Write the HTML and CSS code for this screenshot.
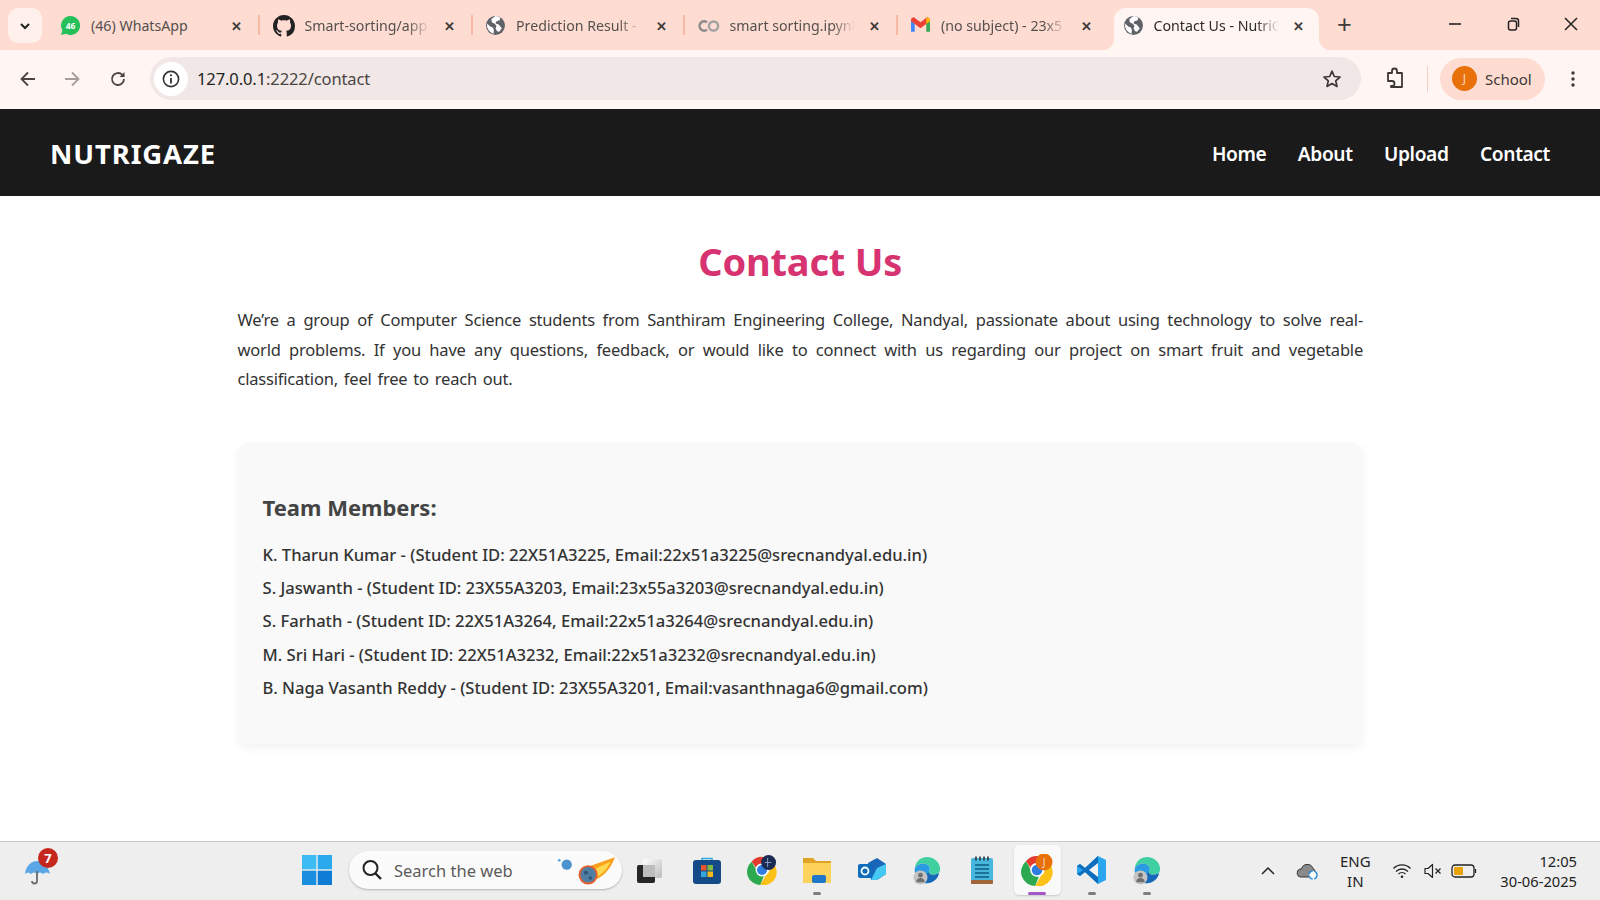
FILE: index.html
```html
<!DOCTYPE html>
<html lang="en">
<head>
<meta charset="utf-8">
<title>Contact Us - NutriGaze</title>
<link rel="stylesheet" href="styles.css">
</head>
<body>
<div class="screen">
  <header class="tabstrip">
    <div class="tabmenu"><svg class="i12" viewBox="0 0 12 12"><path d="M2 4l4 4 4-4" fill="none" stroke="#222" stroke-width="2"/></svg></div>
    <div class="tab">
      <svg class="favicon" viewBox="0 0 20 20"><path d="M10 1a9 9 0 0 0-7.700 13.600L1 19l4.600-1.200A9 9 0 1 0 10 1z" fill="#25c05a"/><text x="10" y="13.500" class="favbadge">46</text></svg>
      <span class="tabtitle">(46) WhatsApp</span><span class="tabx">✕</span>
    </div>
    <div class="tab">
      <svg class="favicon big" viewBox="0 0 16 16"><path fill="#222" d="M8 0C3.580 0 0 3.580 0 8c0 3.540 2.290 6.530 5.470 7.590.4.070.55-.17.55-.38 0-.19-.01-.82-.01-1.490-2.010.37-2.530-.49-2.690-.94-.09-.23-.48-.94-.82-1.130-.28-.15-.68-.52-.01-.53.63-.01 1.080.58 1.230.82.72 1.210 1.870.87 2.330.66.07-.52.28-.87.51-1.070-1.780-.2-3.640-.89-3.640-3.950 0-.87.31-1.590.82-2.150-.08-.2-.36-1.020.08-2.120 0 0 .67-.21 2.200.82.64-.18 1.320-.27 2-.27s1.360.09 2 .27c1.530-1.040 2.200-.82 2.200-.82.44 1.100.16 1.920.08 2.120.51.56.82 1.270.82 2.150 0 3.070-1.870 3.750-3.650 3.950.29.25.54.73.54 1.480 0 1.070-.01 1.930-.01 2.200 0 .21.15.46.55.38A8.010 8.010 0 0 0 16 8c0-4.420-3.580-8-8-8z"/></svg>
      <span class="tabtitle fade">Smart-sorting/app</span><span class="tabx">✕</span>
    </div>
    <div class="tab">
      <svg class="favicon" viewBox="0 0 20 20"><use href="#globe"/></svg>
      <span class="tabtitle fade">Prediction Result -</span><span class="tabx">✕</span>
    </div>
    <div class="tab">
      <svg class="favicon wide" viewBox="0 0 22 14"><path d="M9 3.200a4.700 4.700 0 1 0 0 7.600" fill="none" stroke="#8d8d8d" stroke-width="2.500"/><circle cx="15.500" cy="7" r="4.600" fill="none" stroke="#a3a3a3" stroke-width="2.500"/></svg>
      <span class="tabtitle fade">smart sorting.ipynb</span><span class="tabx">✕</span>
    </div>
    <div class="tab">
      <svg class="favicon" viewBox="0 0 20 20"><path d="M1 5v11h3.500V8z" fill="#4285f4"/><path d="M15.500 8v8H19V5z" fill="#34a853"/><path d="M1 3.500V6l9 6.500L19 6V3.500L16.500 2 10 7 3.500 2z" fill="#ea4335"/><path d="M15.500 3.200V8.500L19 6V3.500L16.800 2.200z" fill="#fbbc04"/></svg>
      <span class="tabtitle fade">(no subject) - 23x5</span><span class="tabx">✕</span>
    </div>
    <div class="tab active">
      <svg class="favicon" viewBox="0 0 20 20"><use href="#globe"/></svg>
      <span class="tabtitle fade">Contact Us - NutriG</span><span class="tabx">✕</span>
    </div>
    <div class="newtab">+</div>
    <div class="winctl">
      <svg class="i16" viewBox="0 0 16 16"><path d="M2 8h12" stroke="#222" stroke-width="1.600"/></svg>
      <svg class="i16" viewBox="0 0 16 16"><rect x="3.500" y="5" width="8" height="9" rx="2" fill="none" stroke="#222" stroke-width="1.500"/><path d="M6 2.500h5a2.500 2.500 0 0 1 2.500 2.500v6" fill="none" stroke="#222" stroke-width="1.500"/></svg>
      <svg class="i16" viewBox="0 0 16 16"><path d="M2 2l12 12M14 2L2 14" stroke="#222" stroke-width="1.500"/></svg>
    </div>
  </header>

  <div class="toolbar">
    <svg class="i20 navbtn" viewBox="0 0 20 20"><path d="M17 10H4M10 3.500L3.500 10l6.500 6.500" fill="none" stroke="#4a4543" stroke-width="1.800"/></svg>
    <svg class="i20 navbtn" viewBox="0 0 20 20"><path d="M3 10h13M10 3.500l6.500 6.500-6.500 6.500" fill="none" stroke="#a39e9c" stroke-width="1.800"/></svg>
    <svg class="i20 navbtn" viewBox="0 0 20 20"><path d="M16 10a6 6 0 1 1-1.800-4.300L16 7.500" fill="none" stroke="#4a4543" stroke-width="1.800"/><path d="M16.500 3v5h-5z" fill="#4a4543"/></svg>
    <div class="omnibox">
      <span class="siteinfo"><svg class="i20" viewBox="0 0 20 20"><circle cx="10" cy="10" r="7.600" fill="none" stroke="#333" stroke-width="1.600"/><path d="M10 9v5.500" stroke="#333" stroke-width="1.800"/><circle cx="10" cy="6.300" r="1.100" fill="#333"/></svg></span>
      <span class="url">127.0.0.1<span class="urlrest">:2222/contact</span></span>
      <svg class="i20 star" viewBox="0 0 20 20"><path d="M10 2.200l2.300 5.300 5.700.5-4.300 3.800 1.300 5.600L10 14.500l-5 2.900 1.300-5.600L2 8l5.700-.5z" fill="none" stroke="#3c3836" stroke-width="1.700" stroke-linejoin="round"/></svg>
    </div>
    <svg class="i24 ext" viewBox="0 0 24 24"><path d="M5 7h4V5a2.500 2.500 0 0 1 5 0v2h5v14H8v-1h1a2.500 2.500 0 0 0 0-5H5z" transform="translate(0 -1)" fill="none" stroke="#3c3836" stroke-width="1.800" stroke-linejoin="round"/></svg>
    <span class="toolsep"></span>
    <div class="profile"><span class="avatar">J</span><span class="profname">School</span></div>
    <svg class="i20 kebab" viewBox="0 0 20 20"><circle cx="10" cy="4" r="1.700" fill="#3c3836"/><circle cx="10" cy="10" r="1.700" fill="#3c3836"/><circle cx="10" cy="16" r="1.700" fill="#3c3836"/></svg>
  </div>

  <nav class="sitenav">
    <div class="logo">NUTRIGAZE</div>
    <div class="navlinks"><a>Home</a><a>About</a><a>Upload</a><a>Contact</a></div>
  </nav>

  <main class="page">
    <h1>Contact Us</h1>
    <p class="intro">We’re a group of Computer Science students from Santhiram Engineering College, Nandyal, passionate about using technology to solve real-world problems. If you have any questions, feedback, or would like to connect with us regarding our project on smart fruit and vegetable classification, feel free to reach out.</p>
    <section class="card">
      <h2>Team Members:</h2>
      <ul>
        <li>K. Tharun Kumar - (Student ID: 22X51A3225, Email:22x51a3225@srecnandyal.edu.in)</li>
        <li>S. Jaswanth - (Student ID: 23X55A3203, Email:23x55a3203@srecnandyal.edu.in)</li>
        <li>S. Farhath - (Student ID: 22X51A3264, Email:22x51a3264@srecnandyal.edu.in)</li>
        <li>M. Sri Hari - (Student ID: 22X51A3232, Email:22x51a3232@srecnandyal.edu.in)</li>
        <li>B. Naga Vasanth Reddy - (Student ID: 23X55A3201, Email:vasanthnaga6@gmail.com)</li>
      </ul>
    </section>
  </main>

  <footer class="taskbar">
    <div class="weather">
      <svg class="i32" viewBox="0 0 32 32"><path d="M3 20C4 11 10 7 15 7s11 4 13 13c-3-2-5-2-7 0-2-2-4-2-6 0-2-2-4-2-6 0-2-2-4-2-6 0z" fill="#5aa7e8"/><path d="M15 17v10a2.500 2.500 0 0 1-5 0" fill="none" stroke="#6b6b6b" stroke-width="1.800"/></svg>
      <span class="wbadge">7</span>
    </div>
    <div class="tbcenter">
      <svg class="winlogo" viewBox="0 0 30 30"><rect width="14.300" height="14.300" fill="#3cbcf3"/><rect x="15.700" width="14.300" height="14.300" fill="#2aa9ec"/><rect y="15.700" width="14.300" height="14.300" fill="#1a8fe0"/><rect x="15.700" y="15.700" width="14.300" height="14.300" fill="#0f7dd6"/></svg>
      <div class="search">
        <svg class="i24" viewBox="0 0 24 24"><circle cx="10.500" cy="10" r="7" fill="none" stroke="#222" stroke-width="2"/><path d="M15.500 15.500L21 21" stroke="#222" stroke-width="2.400"/></svg>
        <span class="stext">Search the web</span>
        <svg class="comet" viewBox="0 0 56 28"><circle cx="3" cy="5" r="1.300" fill="#58a6df"/><circle cx="10" cy="9" r="4.800" fill="#4b93cf"/><path d="M27 12L55 2c-3 8-8 17-19 21z" fill="#f9a11b"/><path d="M36 13l15-7c-3 6-6 11-13 14z" fill="#ffd84d"/><circle cx="30" cy="18.500" r="9" fill="#e8612c"/><circle cx="30" cy="18.500" r="7.200" fill="#4f7da3"/><circle cx="28" cy="16.500" r="1.900" fill="#2f5674"/><circle cx="32" cy="21.500" r="1.600" fill="#2f5674"/></svg>
      </div>
      <div class="tbicons">
        <span class="tbi first"><svg class="i30" viewBox="0 0 30 30"><defs><linearGradient id="tv" x1="0" y1="0" x2="1" y2="1"><stop offset="0" stop-color="#fff"/><stop offset="1" stop-color="#bbb"/></linearGradient></defs><rect x="9" y="4" width="19" height="19" rx="2" fill="url(#tv)"/><rect x="3" y="10" width="18" height="18" rx="2" fill="#262626"/><rect x="9" y="10" width="12" height="12" fill="#bdbdbd"/></svg></span>
        <span class="tbi"><svg class="i30" viewBox="0 0 30 30"><path d="M10 6V3.500h10V6" fill="none" stroke="#33a6dc" stroke-width="1.500"/><rect x="1" y="5" width="28" height="24" rx="3" fill="#134a87"/><rect x="9" y="10" width="5.500" height="5.500" fill="#e7532f"/><rect x="15.500" y="10" width="5.500" height="5.500" fill="#7ebb42"/><rect x="9" y="16.500" width="5.500" height="5.500" fill="#33a6dc"/><rect x="15.500" y="16.500" width="5.500" height="5.500" fill="#f7b91c"/></svg></span>
        <span class="tbi"><svg class="i30" viewBox="0 0 32 32"><use href="#chrome"/><circle cx="23" cy="8" r="8" fill="#1b2a52"/><path d="M22 3v10M19 8h7" stroke="#8ea2c8" stroke-width="1"/></svg></span>
        <span class="tbi"><svg class="i32" viewBox="0 0 32 32"><path d="M2 4h10l3 3h15v5H2z" fill="#e0a324"/><path d="M2 9h28v20H2z" fill="#fdd25b"/><rect x="11" y="21" width="14" height="8" rx="2" fill="#1f77c9"/></svg><span class="run"></span></span>
        <span class="tbi"><svg class="i30" viewBox="0 0 30 30"><path d="M11 8l9-5 9 6v10l-9 6H14z" fill="#1a66b8"/><path d="M20 13l9-4v10l-9 6H14z" fill="#45c8f1"/><rect x="1" y="9" width="14" height="14" rx="2" fill="#0f6cbd"/><circle cx="8" cy="16" r="3.500" fill="none" stroke="#fff" stroke-width="1.800"/></svg></span>
        <span class="tbi"><svg class="i30" viewBox="0 0 32 32"><use href="#edge"/></svg></span>
        <span class="tbi"><svg class="i30" viewBox="0 0 30 30"><rect x="4" y="3" width="22" height="25" rx="2" fill="#46b6dd"/><rect x="4" y="25" width="22" height="4" rx="1" fill="#a2653a"/><path d="M9 1.500v4M13 1.500v4M17 1.500v4M21 1.500v4" stroke="#263238" stroke-width="1.600"/><path d="M8 10h14M8 14h14M8 18h14M8 22h14" stroke="#0e5d80" stroke-width="1.300"/></svg></span>
        <span class="tbi current"><svg class="i32" viewBox="0 0 32 32"><use href="#chrome"/><circle cx="23" cy="8" r="8.500" fill="#e8710a"/><text x="23" y="12" class="jbadge">J</text></svg><span class="run purple"></span></span>
        <span class="tbi"><svg class="i30" viewBox="0 0 30 30"><path d="M21 1l8 4v20l-8 4L8 17l-5 4-3-2v-8l3-2 5 4z" fill="#2aa6ee"/><path d="M21 1v28L8 17l-5 4-3-2 6-4-6-4 3-2 5 4z" fill="#0f6dbf"/><path d="M21 8v14l-9-7z" fill="#f3f3f3"/></svg><span class="run"></span></span>
        <span class="tbi"><svg class="i30" viewBox="0 0 32 32"><use href="#edge"/></svg><span class="run"></span></span>
      </div>
    </div>
    <div class="tray">
      <svg class="i16" viewBox="0 0 16 16"><path d="M2 11l6-6 6 6" fill="none" stroke="#222" stroke-width="1.500"/></svg>
      <svg class="i24 cloud" viewBox="0 0 24 24"><path d="M5 18a4 4 0 0 1 .5-8A6 6 0 0 1 17 9.500a3.500 3.500 0 0 1 2 2.500L13 18z" fill="#8a8a8a" stroke="#333" stroke-width="1"/><circle cx="17" cy="16" r="4" fill="#fff" stroke="#2e8fdc" stroke-width="1.400" stroke-dasharray="5 1.500"/></svg>
      <div class="lang"><span>ENG</span><span>IN</span></div>
      <svg class="i20 wifi" viewBox="0 0 20 20"><path d="M1.500 7.500a12 12 0 0 1 17 0M4 10.500a8.500 8.500 0 0 1 12 0M6.500 13a5 5 0 0 1 7 0" fill="none" stroke="#222" stroke-width="1.300"/><circle cx="10" cy="15.800" r="1.300" fill="#222"/></svg>
      <svg class="i20 sound" viewBox="0 0 20 20"><path d="M2 7.500h3L9.500 3.500v13L5 12.500H2z" fill="none" stroke="#222" stroke-width="1.200" stroke-linejoin="round"/><path d="M12.500 7.500l5 5M17.500 7.500l-5 5" stroke="#222" stroke-width="1.200"/></svg>
      <svg class="i24 batt" viewBox="0 0 26 14"><rect x="1" y="1" width="22" height="12" rx="3" fill="none" stroke="#222" stroke-width="1.300"/><rect x="3" y="3" width="9" height="8" rx="1" fill="#e9a30a"/><path d="M24.500 5v4" stroke="#222" stroke-width="1.300"/></svg>
      <div class="clock"><span>12:05</span><span>30-06-2025</span></div>
    </div>
  </footer>
</div>

<svg class="defs" width="0" height="0">
  <defs>
    <symbol id="globe" viewBox="0 0 20 20">
      <circle cx="10" cy="10" r="9" fill="#5f6368"/>
      <path d="M10 1c-1.500 1.500-3 2-4 3l.500 3 3 1.500 1.500 2-1 2 1.500 3 2 .5 2.500-3.500L13 9l-3-1 1-2 3-1 .5-2.500A9 9 0 0 0 10 1zM2 8l3 3 2.500 1 1 2.500L8 18A9 9 0 0 1 2 8z" fill="#fff"/>
    </symbol>
    <symbol id="chrome" viewBox="0 0 32 32">
      <path d="M16 2a14 14 0 0 1 12.100 7H16a7 7 0 0 0-6.500 4.400L4.900 7.300A14 14 0 0 1 16 2z" fill="#e33b2e"/>
      <path d="M4.900 7.300L11 17.500a6 6 0 0 0 7 4.800l-3.800 9.600A14 14 0 0 1 4.900 7.300z" fill="#2da94f"/>
      <path d="M28.100 9A14 14 0 0 1 14.200 31.900L20.500 21a7 7 0 0 0 .5-12z" fill="#fbc116"/>
      <circle cx="16" cy="16" r="6.800" fill="#fff"/>
      <circle cx="16" cy="16" r="5.300" fill="#2f7de1"/>
    </symbol>
    <symbol id="edge" viewBox="0 0 32 32">
      <path d="M3 14C4 6 10 2 16 2c8 0 14 6 14 13 0 4-3 6-7 6-3 0-5-1-5-3 0-1 1-1 1-3 0-3-3-6-7-6-4 0-7 2-9 5z" fill="#3fcfa0"/>
      <path d="M3 14c2-3 5-5 9-5 4 0 7 3 7 6 0 2-1 2-1 3-3 6-3 10 3 11a14 14 0 0 1-8 1C7 29 2 22 3 14z" fill="#2a9be0"/>
      <path d="M18 18c0 2 2 3 5 3 2 0 5-1 6-2-1 6-6 11-13 11-6 0-6-6 2-12z" fill="#1668b8"/>
      <circle cx="9" cy="24" r="7.500" fill="#c4c4c4"/>
      <circle cx="9" cy="21.500" r="2.500" fill="#6f6f6f"/>
      <path d="M4.500 29c0-3 2-4.500 4.500-4.500s4.500 1.500 4.500 4.500z" fill="#6f6f6f"/>
    </symbol>
  </defs>
</svg>
</body>
</html>
```

FILE: styles.css
```css
* { box-sizing: border-box; }
html, body { margin: 0; height: 100%; overflow: hidden; }
body { font-family: "Noto Sans", "Open Sans", "Liberation Sans", sans-serif; color: #333; background: #fff; }
.screen { width: 1600px; height: 900px; display: flex; flex-direction: column; overflow: hidden; }
.defs { display: block; height: 0; }

.i12 { width: 12px; height: 12px; }
.i16 { width: 16px; height: 16px; flex: none; }
.i20 { width: 20px; height: 20px; flex: none; }
.i24 { width: 24px; height: 24px; flex: none; }
.i30 { width: 30px; height: 30px; flex: none; }
.i32 { width: 32px; height: 32px; flex: none; }

/* browser tabs */
.tabstrip { height: 50px; flex: none; display: flex; align-items: flex-end; background: #ffdcd2; padding-left: 8px; }
.tabmenu { width: 34px; height: 35px; margin-bottom: 7px; margin-right: 5.500px; border-radius: 10px; background: #fff0eb; display: flex; align-items: center; justify-content: center; }
.tab { width: 212.500px; height: 42px; flex: none; display: flex; align-items: center; padding: 0 0 7px 12.500px; position: relative; color: #54504e; font-size: 14.200px; }
.tab::after { content: ""; position: absolute; right: 0; top: 7px; height: 20px; width: 2px; background: #f7b9a8; }
.tab:nth-child(6)::after { display: none; }
.tab.active { width: 205px; margin-left: 3.500px; background: #fff6f3; border-radius: 12px 12px 0 0; color: #2c2a29; padding-left: 9px; }
.tab.active::before, .tab.active::after { content: ""; position: absolute; bottom: 0; top: auto; width: 12px; height: 12px; }
.tab.active::before { left: -12px; background: radial-gradient(circle at 0 0, transparent 12px, #fff6f3 12.500px); }
.tab.active::after { right: -12px; background: radial-gradient(circle at 100% 0, transparent 12px, #fff6f3 12.500px); }
.favicon { width: 21px; height: 21px; flex: none; }
.favicon.big { width: 22px; height: 22px; }
.favicon.wide { width: 22px; height: 14px; }
.favbadge { font-size: 8px; font-weight: 700; fill: #fff; text-anchor: middle; font-family: "Noto Sans", sans-serif; }
.jbadge { font-size: 10px; fill: #fbd9c0; text-anchor: middle; font-family: "Noto Sans", sans-serif; }
.tabtitle { width: 125px; margin-left: 10px; white-space: nowrap; overflow: hidden; flex: none; }
.tabtitle.fade { -webkit-mask-image: linear-gradient(90deg, #000 82%, transparent); mask-image: linear-gradient(90deg, #000 82%, transparent); }
.tabx { margin-left: 11px; width: 18px; text-align: center; font-size: 13px; color: #3f3b39; font-weight: 700; }
.newtab { margin-left: 16px; margin-bottom: 8px; font-size: 26px; line-height: 36px; color: #3f3b39; width: 20px; text-align: center; }
.winctl { margin-left: auto; margin-bottom: 18px; display: flex; gap: 42px; padding-right: 21px; }

/* toolbar */
.toolbar { height: 59px; flex: none; display: flex; align-items: center; background: #fff6f3; padding: 0 0 2px 18px; }
.navbtn { margin-right: 24px; }
.navbtn:nth-child(2) { margin-right: 25.500px; }
.navbtn:nth-child(3) { margin-right: 22.500px; }
.omnibox { width: 1211px; height: 43px; border-radius: 22px; background: #f1e7e6; display: flex; align-items: center; padding: 0 19px 0 4px; flex: none; }
.siteinfo { width: 34px; height: 34px; border-radius: 50%; background: #fff; display: flex; align-items: center; justify-content: center; flex: none; }
.url { margin-left: 9px; font-size: 16.500px; letter-spacing: -.1px; color: #1f1f1f; }
.urlrest { color: #4a4543; }
.star { margin-left: auto; }
.ext { margin-left: 22px; }
.toolsep { width: 1px; height: 26px; background: #f3cfc5; margin-left: 20px; }
.profile { margin-left: 12px; width: 105px; height: 42px; border-radius: 21px; background: #ffdcd2; display: flex; align-items: center; padding-left: 12px; gap: 8px; color: #3c3836; font-size: 15px; flex: none; }
.avatar { width: 25px; height: 25px; border-radius: 50%; background: #e8710a; color: #fbd9c0; font-size: 12px; display: flex; align-items: center; justify-content: center; }
.kebab { margin-left: 18px; }

/* site navigation */
.sitenav { height: 87px; flex: none; background: #1a1a1a; display: flex; align-items: center; justify-content: space-between; padding: 1px 50px 0; color: #fff; }
.logo { font-size: 27.500px; font-weight: 700; letter-spacing: .9px; }
.navlinks { display: flex; gap: 31.500px; font-size: 19.200px; font-weight: 600; letter-spacing: -.4px; }

/* page */
.page { flex: 1; min-height: 0; padding: 0 237px 0 237.500px; }
h1 { margin: 39px 0 0; text-align: center; font-size: 38px; line-height: 52px; font-weight: 700; color: #d63370; letter-spacing: -.2px; }
.intro { margin: 18px 0 0; font-size: 16.500px; letter-spacing: -.2px; word-spacing: 1.800px; line-height: 29.600px; text-align: justify; color: #333; }
.card { margin-top: 49px; height: 301px; background: #f9f9f9; border-radius: 10px; box-shadow: 0 4px 10px rgba(0,0,0,.05); padding: 48px 25px 0; }
h2 { margin: 0; font-size: 22px; line-height: 32px; font-weight: 700; color: #444; }
ul { list-style: none; margin: 15px 0 0; padding: 0; }
li { font-size: 16.600px; line-height: 33.300px; color: #333; font-weight: 500; }

/* windows taskbar */
.taskbar { height: 59px; flex: none; background: #eeeeee; border-top: 1px solid #c8c8c8; display: flex; align-items: center; position: relative; }
.weather { position: absolute; left: 22px; top: 12px; }
.wbadge { position: absolute; left: 16px; top: -6px; width: 20px; height: 20px; border-radius: 50%; background: #c4281c; color: #fff; font-size: 13px; font-weight: 700; display: flex; align-items: center; justify-content: center; }
.tbcenter { margin: 0 0 2px 302px; display: flex; align-items: center; }
.winlogo { width: 30px; height: 30px; flex: none; }
.search { margin-left: 17px; width: 273px; height: 38px; border-radius: 19px; background: #fbfbfb; box-shadow: 0 1px 2px rgba(0,0,0,.25); display: flex; align-items: center; padding-left: 11px; }
.stext { margin-left: 10px; font-size: 16.500px; color: #5c5c5c; }
.comet { width: 60px; height: 30px; margin-left: auto; margin-right: 6px; }
.tbicons { display: flex; align-items: center; }
.tbi { width: 55px; height: 50px; display: flex; align-items: center; justify-content: center; position: relative; flex: none; }
.tbi.first { width: 53px; margin-right: 4.500px; }
.tbi.current::before { content: ""; position: absolute; left: 4px; right: 4px; top: 0; bottom: 0; background: #f9f9f9; border-radius: 5px; box-shadow: 0 1px 2px rgba(0,0,0,.15); }
.tbi.current svg { position: relative; }
.run { position: absolute; bottom: 0; left: 50%; width: 8px; height: 3px; margin-left: -4px; border-radius: 2px; background: #7d7d7d; }
.run.purple { width: 18px; margin-left: -9px; background: #a457c9; }
.tray { position: absolute; right: 23px; top: 0; height: 100%; display: flex; align-items: center; color: #222; font-size: 15px; padding-bottom: 1px; }
.cloud { margin-left: 20px; }
.lang { margin-left: 17px; width: 36px; display: flex; flex-direction: column; align-items: center; line-height: 20px; }
.wifi { margin-left: 19px; }
.sound { margin-left: 11px; }
.batt { margin-left: 8px; height: 14px; width: 26px; }
.clock { margin-left: 23px; display: flex; flex-direction: column; align-items: flex-end; line-height: 20px; font-size: 14.700px; }
```
